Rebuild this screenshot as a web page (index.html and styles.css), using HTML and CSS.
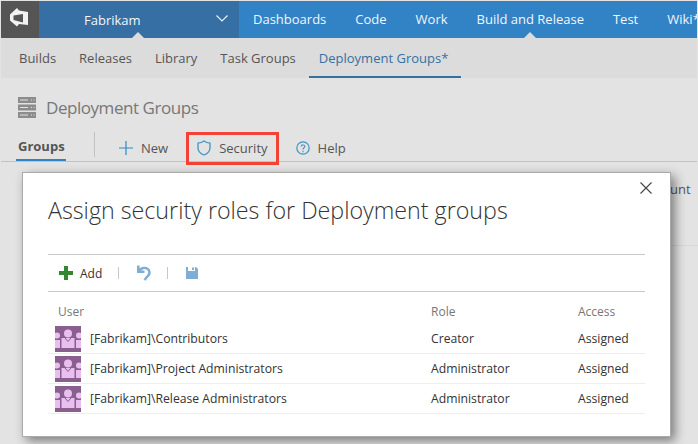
FILE: index.html
```html
<!DOCTYPE html>
<html lang="en">
<head>
    <meta charset="UTF-8">
    <meta name="viewport" content="width=device-width, initial-scale=1.0">
    <title>Deployment Groups</title>
    <link rel="stylesheet" href="styles.css">
</head>
<body>
    <div class="page">
        <header class="topbar">
            <div class="logo">
                <svg width="20" height="20" viewBox="10 8 20 20"><path d="M17 8l2 2.500 9 1.500v13l-9-1-2 2.500-7-6v-6z M13.500 15.500v4.500l9.500 2.500v-8.500z" fill="#f2f2f2" fill-rule="evenodd"/></svg>
            </div>
            <div class="project">
                <span>Fabrikam</span>
                <svg class="chevron" width="12" height="7" viewBox="0 0 12 7"><path d="M.5.500L6 6l5.500-5.500" fill="none" stroke="#e8f0f7" stroke-width="1.200"/></svg>
                <i class="notch notch-project"></i>
            </div>
            <nav class="mainnav">
                <a>Dashboards</a>
                <a>Code</a>
                <a>Work</a>
                <a class="current">Build and Release<i class="notch notch-hub"></i></a>
                <a>Test</a>
                <a>Wiki*</a>
            </nav>
        </header>

        <nav class="subnav">
            <a>Builds</a>
            <a>Releases</a>
            <a>Library</a>
            <a>Task Groups</a>
            <a class="active">Deployment Groups*</a>
        </nav>

        <div class="titlerow">
            <svg width="18" height="21" viewBox="0 0 18 21">
                <path d="M0 0h18v6H0z M0 7.500h18v6H0z M0 15h18v6H0z" fill="#8c8c8c"/>
                <path d="M2 3h8M2 10.500h8M2 18h8M13 3h1M15.500 3h1M13 10.500h1M15.500 10.500h1M13 18h1M15.500 18h1" stroke="#e3e3e3"/>
            </svg>
            <h1>Deployment Groups</h1>
        </div>

        <div class="tabbar">
            <div class="tab">Groups</div>
            <div class="divider"></div>
            <div class="action action-new">
                <svg width="14" height="14" viewBox="0 0 14 14"><path d="M7 0v14M0 7h14" stroke="#2f8ac4" stroke-width="1.200"/></svg>
                New
            </div>
            <div class="action action-security">
                <svg width="14" height="16" viewBox="0 0 14 16"><path d="M7 1c2 1.400 3.800 2 6 2.200V8c0 3.200-2.600 5.600-6 7-3.400-1.400-6-3.800-6-7V3.200C3.200 3 5 2.400 7 1z" fill="none" stroke="#3f94c4" stroke-width="1.300"/></svg>
                Security
            </div>
            <div class="action action-help">
                <svg width="14" height="14" viewBox="0 0 14 14"><circle cx="7" cy="7" r="6.200" fill="none" stroke="#3f94c4" stroke-width="1.200"/><path d="M5.200 5.500C5.300 3.300 8.900 3.500 8.800 5.500 8.700 6.800 7 6.800 7 8.600M7 9.800v1.400" fill="none" stroke="#3f94c4" stroke-width="1.100"/></svg>
                Help
            </div>
        </div>

        <div class="behind">unt</div>
        <div class="behind-rule"></div>
        <div class="highlight"></div>

        <div class="modal">
            <button class="close" aria-label="Close">
                <svg width="12" height="12" viewBox="0 0 12 12"><path d="M.5.500l11 11M11.500.500l-11 11" stroke="#444" stroke-width="1.100"/></svg>
            </button>
            <h2>Assign security roles for Deployment groups</h2>

            <div class="toolbar">
                <svg width="14" height="14" viewBox="0 0 14 14"><path d="M5 0h4v5h5v4H9v5H5V9H0V5h5z" fill="#35872f"/></svg>
                <span class="add">Add</span>
                <i class="sep"></i>
                <svg width="14" height="16" viewBox="0 0 14 16"><path d="M1.300.500v6.300h6.200M2 5.800C4.500 2.800 8 2.200 10.400 3.800c2.800 1.900 2.600 5 .6 7L7.500 15" fill="none" stroke="#7fadd4" stroke-width="2.500"/></svg>
                <i class="sep"></i>
                <svg width="12" height="12" viewBox="0 0 12 12"><path d="M0 0h2v4h7V0h1l2 2v10H0z M6 .5h2v2.500H6z" fill="#7fadd4"/></svg>
            </div>

            <div class="grid grid-head">
                <div class="cell-user">User</div>
                <div>Role</div>
                <div>Access</div>
            </div>

            <div class="grid row">
                <div class="cell-user"><svg class="avatar"><use href="#group"/></svg>[Fabrikam]\Contributors</div>
                <div>Creator</div>
                <div>Assigned</div>
            </div>
            <div class="grid row">
                <div class="cell-user"><svg class="avatar"><use href="#group"/></svg>[Fabrikam]\Project Administrators</div>
                <div>Administrator</div>
                <div>Assigned</div>
            </div>
            <div class="grid row">
                <div class="cell-user"><svg class="avatar"><use href="#group"/></svg>[Fabrikam]\Release Administrators</div>
                <div>Administrator</div>
                <div>Assigned</div>
            </div>
        </div>
    </div>

    <svg width="0" height="0" class="defs">
        <symbol id="group" viewBox="0 0 26 26">
            <rect width="26" height="26" fill="#8a5e8f"/>
            <g fill="#e8bfee">
                <circle cx="13" cy="7.500" r="4"/>
                <path d="M6.500 12h13v10h-13z"/>
                <circle cx="2" cy="9.500" r="3"/>
                <path d="M0 14h5v8H0z"/>
                <circle cx="24" cy="9.500" r="3"/>
                <path d="M21 14h5v8h-5z"/>
            </g>
            <path d="M10 12l3 3.500 3-3.500" fill="none" stroke="#8a5e8f" stroke-width="1"/>
        </symbol>
    </svg>
</body>
</html>
```

FILE: styles.css
```css
* {
    box-sizing: border-box;
}

html, body {
    margin: 0;
    height: 100%;
    overflow: hidden;
}

body {
    font-family: "Open Sans", "Noto Sans", sans-serif;
    font-size: 13px;
    color: #333;
    background-color: #e3e3e3;
}

.page {
    position: relative;
    height: 444px;
    padding: 1px 1px 0;
}

.topbar {
    display: flex;
    height: 37px;
    background-color: #3282c6;
    color: #f1f6fb;
    overflow: hidden;
}

.logo {
    flex: none;
    width: 38px;
    display: flex;
    align-items: center;
    justify-content: center;
    background-color: #555;
}

.logo svg {
    margin-top: -3px;
}

.project {
    flex: none;
    position: relative;
    width: 200px;
    display: flex;
    align-items: center;
    justify-content: space-between;
    padding: 0 11px 0 45px;
    background-color: #366fa3;
}

.chevron {
    margin-top: -2px;
}

.notch {
    position: absolute;
    bottom: 0;
    border-left: 6px solid transparent;
    border-right: 6px solid transparent;
    border-bottom: 6px solid #dcdcdc;
}

.notch-project {
    left: 93px;
}

.notch-hub {
    left: 50%;
    margin-left: -6px;
}

.mainnav {
    display: flex;
    align-items: center;
    gap: 29px;
    padding-left: 14px;
    white-space: nowrap;
}

.mainnav a {
    position: relative;
    line-height: 37px;
}

.subnav {
    display: flex;
    gap: 23px;
    height: 40px;
    padding-left: 18px;
    background-color: #dcdcdc;
    color: #555;
}

.subnav a {
    line-height: 40px;
}

.subnav .active {
    color: #36709f;
    border-bottom: 2px solid #36709f;
    padding: 0 13px 0 10px;
    margin-left: -10px;
}

.titlerow {
    display: flex;
    align-items: center;
    gap: 10px;
    height: 22px;
    margin: 18px 0 0 17px;
}

.titlerow h1 {
    margin: 0;
    font-size: 17px;
    font-weight: 400;
    letter-spacing: -0.45px;
    color: #777;
}

.tabbar {
    display: flex;
    align-items: center;
    height: 33px;
    margin-top: 11px;
    padding: 6px 0 0 15px;
    border-bottom: 1px solid #c2c2c2;
    color: #555;
}

.tab {
    align-self: flex-end;
    width: 50px;
    height: 24px;
    padding-left: 2px;
    line-height: 19px;
    font-weight: 700;
    border-bottom: 2px solid #3282c6;
    color: #555;
}

.divider {
    align-self: flex-start;
    width: 1px;
    height: 25px;
    margin: -3px 24px 0 28px;
    background-color: #c2c2c2;
}

.action {
    display: flex;
    align-items: center;
    gap: 8px;
}

.action-security {
    margin-left: 29px;
}

.action-help {
    margin-left: 28px;
}

.behind {
    position: absolute;
    top: 180px;
    left: 670px;
    color: #555;
}

.behind-rule {
    position: absolute;
    top: 245px;
    left: 670px;
    right: 0;
    height: 1px;
    background-color: #d8d8d8;
}

.highlight {
    position: absolute;
    left: 186px;
    top: 132px;
    width: 93px;
    height: 33px;
    border: 3px solid #f44336;
}

.modal {
    position: absolute;
    left: 22px;
    top: 172px;
    width: 649px;
    height: 265px;
    padding: 0 25px;
    background-color: #fff;
    border: 1px solid #aaa;
    box-shadow: 4px 4px 10px rgba(0, 0, 0, 0.45);
}

.modal h2 {
    margin: 23px 0 0;
    font-size: 23.250px;
    line-height: 28px;
    font-weight: 300;
    color: #333;
}

.close {
    position: absolute;
    top: 9px;
    right: 18px;
    padding: 0;
    border: 0;
    background: none;
    display: flex;
}

.toolbar {
    display: flex;
    align-items: center;
    height: 38px;
    margin-top: 30px;
    padding-left: 11px;
    border-top: 1px solid #c8c8c8;
    border-bottom: 1px solid #c8c8c8;
}

.add {
    margin-left: 7px;
    font-size: 12px;
}

.sep {
    width: 1px;
    height: 12px;
    margin: 0 18px 0 16px;
    background-color: #c8c8c8;
}

.grid {
    display: grid;
    grid-template-columns: 383px 147px 1fr;
    font-size: 12.200px;
}

.grid-head {
    height: 32px;
    padding-top: 11px;
    font-size: 12px;
    color: #777;
}

.grid-head .cell-user {
    padding-left: 10px;
    align-items: flex-start;
}

.row {
    height: 30px;
    align-items: center;
    border-bottom: 1px solid #eee;
}

.cell-user {
    display: flex;
    align-items: center;
}

.avatar {
    width: 26px;
    height: 26px;
    margin: 0 9px 0 7px;
}

.defs {
    position: absolute;
}
```
